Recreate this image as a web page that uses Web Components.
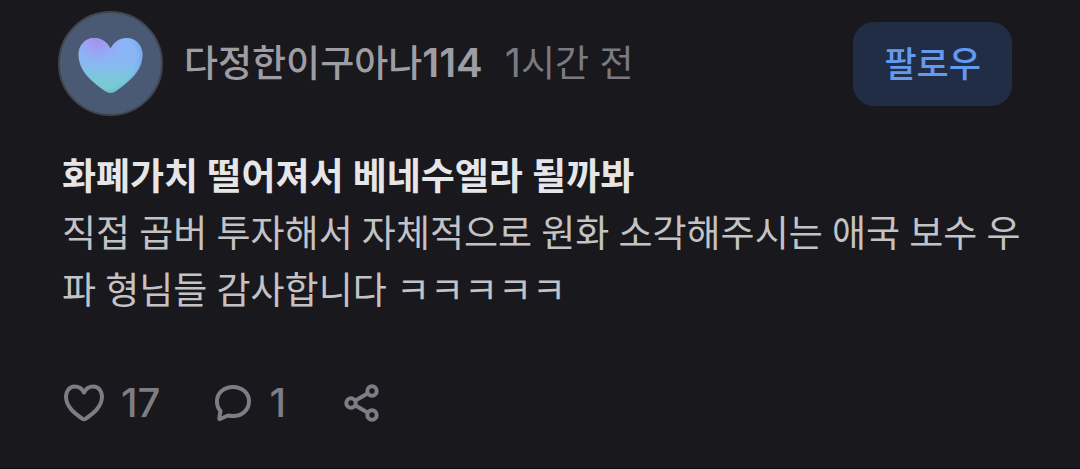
<!DOCTYPE html>
<html lang="ko">
<head>
<meta charset="utf-8">
<meta name="viewport" content="width=device-width, initial-scale=1">
<title>커뮤니티 글</title>
<style>
  body { margin: 0; background: #19181d; font-family: "Inter", "Noto Sans CJK KR", sans-serif; }
  .num { font-size: 40px; }
  .strong { font-weight: 600; }
</style>
</head>
<body>
<post-card>
  <post-header slot="header">
    <user-avatar slot="avatar"></user-avatar>
    <span slot="name">다정한이구아나<span class="num strong">114</span></span>
    <time slot="time"><span class="num">1</span>시간 전</time>
    <follow-button slot="action">팔로우</follow-button>
  </post-header>
  <post-body>
    <span slot="title">화폐가치 떨어져서 베네수엘라 될까봐</span>
    직접 곱버 투자해서 자체적으로 원화 소각해주시는 애국 보수 우파 형님들 감사합니다 ㅋㅋㅋㅋㅋ
  </post-body>
  <post-actions slot="footer" likes="17" comments="1"></post-actions>
</post-card>

<script>
class BaseElement extends HTMLElement {
  connectedCallback() {
    if (this.shadowRoot) return;
    this.attachShadow({ mode: "open" }).innerHTML = this.render();
  }
}

customElements.define("post-card", class extends BaseElement {
  render() {
    return `
      <style>
        :host { display: block; }
        article { display: flex; flex-direction: column; padding: 11px 48px 44px 58px; border-bottom: 1px solid #0f0a0e; }
      </style>
      <article>
        <slot name="header"></slot>
        <slot></slot>
        <slot name="footer"></slot>
      </article>`;
  }
});

customElements.define("post-header", class extends BaseElement {
  render() {
    return `
      <style>
        :host { display: block; }
        header { display: flex; align-items: center; padding-right: 20px; }
        .byline { display: flex; flex: 1; align-items: baseline; gap: 22px; margin-left: 21px; font-size: 37px; line-height: 56px; }
        .name { color: #9e9da3; font-weight: 500; }
        .time { color: #7b7a83; }
      </style>
      <header>
        <slot name="avatar"></slot>
        <div class="byline">
          <span class="name"><slot name="name"></slot></span>
          <span class="time"><slot name="time"></slot></span>
        </div>
        <slot name="action"></slot>
      </header>`;
  }
});

customElements.define("user-avatar", class extends BaseElement {
  render() {
    return `
      <style>
        :host { display: block; width: 105px; height: 105px; }
        svg { display: block; width: 100%; height: 100%; }
      </style>
      <svg viewBox="0 0 105 105" aria-hidden="true">
        <defs>
          <linearGradient id="base" x1="0" y1="0" x2="0" y2="1">
            <stop offset="0" stop-color="#8cb4fa"/>
            <stop offset=".45" stop-color="#88b8f2"/>
            <stop offset=".75" stop-color="#7bc8da"/>
            <stop offset="1" stop-color="#75cdc8"/>
          </linearGradient>
          <radialGradient id="violet" gradientUnits="userSpaceOnUse" cx="40" cy="27" r="30">
            <stop offset="0" stop-color="#a78fe8"/>
            <stop offset=".35" stop-color="#a498f0" stop-opacity=".8"/>
            <stop offset="1" stop-color="#94b0fa" stop-opacity="0"/>
          </radialGradient>
          <radialGradient id="edge" gradientUnits="userSpaceOnUse" cx="47" cy="46" r="42">
            <stop offset=".72" stop-color="#609ce8" stop-opacity="0"/>
            <stop offset="1" stop-color="#609ce8" stop-opacity=".7"/>
          </radialGradient>
          <clipPath id="heart">
            <path d="M52.500 37.500C49 31 43 27 36.500 27C27 27 20.500 34.500 20.500 43.500C20.500 60 34 71 47 80C51 82.500 54 82.500 58 80C71 71 84.500 60 84.500 43.500C84.500 34.500 78 27 68.500 27C62 27 56 31 52.500 37.500Z"/>
          </clipPath>
        </defs>
        <circle cx="52.5" cy="52.5" r="51.5" fill="#4a5a74" stroke="#42444e" stroke-width="2"/>
        <g clip-path="url(#heart)">
          <rect x="20" y="26" width="65" height="57" fill="url(#base)"/>
          <rect x="20" y="26" width="65" height="57" fill="url(#violet)"/>
          <rect x="20" y="26" width="65" height="57" fill="url(#edge)"/>
        </g>
      </svg>`;
  }
});

customElements.define("follow-button", class extends BaseElement {
  render() {
    return `
      <style>
        :host { display: block; }
        button { display: block; margin: 0; padding: 14px 31px; border: 0; border-radius: 21px; background: #202d45; color: #6399ee; font: inherit; font-size: 35px; font-weight: 500; line-height: 56px; white-space: nowrap; cursor: pointer; }
      </style>
      <button type="button"><slot></slot></button>`;
  }
});

customElements.define("post-body", class extends BaseElement {
  render() {
    return `
      <style>
        :host { display: block; margin-top: 33px; padding: 0 4px; font-family: "Roboto", "Noto Sans CJK KR", sans-serif; font-size: 37px; line-height: 57px; color: #c3c3c6; }
        h2, p { margin: 0; font-size: inherit; }
        h2 { font-weight: 700; color: #e6e6e8; }
        p { font-weight: 400; }
      </style>
      <h2><slot name="title"></slot></h2>
      <p><slot></slot></p>`;
  }
});

customElements.define("post-actions", class extends BaseElement {
  render() {
    return `
      <style>
        :host { display: block; margin-top: 62px; padding: 0 4px; color: #7e7d85; }
        div { display: flex; align-items: center; gap: 50px; }
        button { display: flex; align-items: center; gap: 17px; margin: 0; padding: 0; border: 0; background: none; color: inherit; font: inherit; font-size: 40px; font-weight: 500; line-height: 42px; cursor: pointer; }
        svg { display: block; width: 42px; height: 42px; fill: none; stroke: currentColor; stroke-width: 4; stroke-linecap: round; stroke-linejoin: round; }
      </style>
      <div>
        <button type="button" aria-label="좋아요">
          <svg viewBox="0 0 42 42"><path d="M22 10.500C20 6.500 16.500 4.500 12.800 4.500C7.500 4.500 4 9 4 14.500C4 25 13 31.500 20.200 36.600Q22 37.800 23.800 36.600C31 31.500 40 25 40 14.500C40 9 36.500 4.500 31.200 4.500C27.500 4.500 24 6.500 22 10.500Z"/></svg>
          <span>${this.getAttribute("likes")}</span>
        </button>
        <button type="button" aria-label="댓글">
          <svg viewBox="0 0 42 42"><path d="M23 5C32 5 39 11 39 19.300C39 28 32 34 23 34Q20.500 34 18 33.500L10 37Q9 37.300 9.300 36L10.500 29C8 26.500 7 23 7 19.300C7 11 14 5 23 5Z"/></svg>
          <span>${this.getAttribute("comments")}</span>
        </button>
        <button type="button" aria-label="공유">
          <svg viewBox="0 0 44 42" style="width:44px"><circle cx="15" cy="21" r="4.700"/><circle cx="36" cy="9" r="4.700"/><circle cx="36" cy="33" r="4.700"/><path d="M19.500 18.500L31.500 11.500M19.500 23.500L31.500 30.500"/></svg>
        </button>
      </div>`;
  }
});
</script>
</body>
</html>
